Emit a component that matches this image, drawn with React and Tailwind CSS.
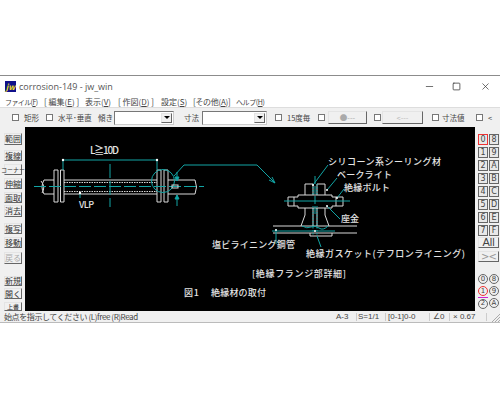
import { Minus, Square, X } from 'lucide-react';

const jp = "font-['Noto_Sans_CJK_JP','Noto_Sans',sans-serif]";
const bevel = 'border border-t-[#e4e4e4] border-l-[#e4e4e4] border-r-[#666] border-b-[#666] bg-[#f0f0f0]';

const sideButtons = [
  { label: '範囲', cls: 'mt-[6px] h-[12px]' },
  { label: '複線', cls: 'mt-[5px] h-[11px]' },
  { label: 'コーナー', cls: 'mt-[3px] h-[11px]', small: true },
  { label: '伸縮', cls: 'mt-[3px] h-[11px]' },
  { label: '面取', cls: 'mt-[3px] h-[11px]' },
  { label: '消去', cls: 'mt-[2px] h-[12px]' },
  { label: '複写', cls: 'mt-[6px] h-[11px]' },
  { label: '移動', cls: 'mt-[3px] h-[11px]' },
  { label: '戻る', cls: 'mt-[4px] h-[12px]', off: true },
  { label: '新規', cls: 'mt-[12px] h-[10px]' },
  { label: '開く', cls: 'mt-[2px] h-[11px]' },
  { label: '上書', cls: 'mt-[3px] h-[9px]', small: true },
];

const layerRows = [['0', '8'], ['1', '9'], ['2', 'A'], ['3', 'B'], ['4', 'C'], ['5', 'D'], ['6', 'E'], ['7', 'F']];

function Check({ cls = '' }) {
  return <span className={`inline-block w-[7px] h-[7px] shrink-0 bg-white border border-[#777] ${cls}`} />;
}

function Combo({ cls }) {
  return (
    <span className={`flex h-[14px] shrink-0 items-center justify-end bg-white border border-t-[#777] border-l-[#777] border-r-[#ccc] border-b-[#ccc] ${cls}`}>
      <span className={`flex h-[10px] w-[11px] items-center justify-center mr-[1px] ${bevel}`}>
        <span className="h-0 w-0 border-x-[3px] border-t-[3px] border-x-transparent border-t-black" />
      </span>
    </span>
  );
}

function Layer({ text, red }) {
  return (
    <span className={`flex h-[11px] w-[10px] items-center justify-center text-[8px] text-[#444] bg-[#e8e8e8] border ${red ? 'border-[#e33]' : 'border-[#666]'}`}>
      {text}
    </span>
  );
}

function Round({ text, ring, bar }) {
  return (
    <span className={`flex h-[12px] w-[10px] items-center justify-center ${bar ? 'border-t border-t-[#d020d0]' : ''}`}>
      <span className={`flex h-[10px] w-[10px] items-center justify-center rounded-full bg-[#eee] border text-[7px] text-[#444] ${ring ? 'border-[#e33]' : 'border-[#666]'}`}>
        {text}
      </span>
    </span>
  );
}

function Label({ x, y, w, children, size = 9 }) {
  return (
    <text x={x} y={y} textLength={w} lengthAdjust="spacing" fontSize={size} fill="#e4e4e4" fontWeight="500" fontFamily="'Noto Sans CJK JP', sans-serif">
      {children}
    </text>
  );
}

function Drawing() {
  const teal = '#12a5a5';
  const white = '#d8d8d8';
  return (
    <svg viewBox="25 127 450 184" className="block h-[184px] w-[450px]" fill="none" strokeWidth="1">
      {/* pipe */}
      <path d="M64 180H157M64 194H157M168 180H195Q198 187 195 194H168M54 180H44Q40 187 44 194H54" stroke={white} />
      <path d="M41 181Q46 187 42 193" stroke={white} />
      <path d="M64 182.500H157M64 191.500H157" stroke={white} strokeDasharray="1.500 1" />
      <path d="M54 170H58V202H54ZM60.500 170H64V202H60.500ZM157 170H161V202H157ZM164 170H168V202H164Z" stroke={white} />
      <path d="M34 186.500H204" stroke={teal} strokeDasharray="12 3" />
      <path d="M110 164V207" stroke={teal} strokeDasharray="14 3" />
      <path d="M63 160H157M63 160V170M157 160V170" stroke={teal} />
      <circle cx="63" cy="160" r="1.200" fill="#fff" />
      <circle cx="157" cy="160" r="1.200" fill="#fff" />
      <circle cx="163" cy="181" r="11.500" stroke={teal} />
      <path d="M174 176L184 165H257L275 183" stroke={teal} />
      <path d="M275 183L269 180M275 183L272 177" stroke={teal} />
      <rect x="172" y="185" width="6" height="3" stroke={white} />
      <path d="M177 172V180M177 195V206" stroke={teal} />
      <path d="M175 177L177 181L179 177ZM175 199L177 195L179 199Z" fill={teal} stroke={teal} />
      <path d="M80 193V198" stroke={teal} />
      <circle cx="80" cy="193" r="1.200" fill="#fff" />
      <Label x={90} y={154} w={29} size={10}>L≧10D</Label>
      <Label x={79} y={208} w={15} size={9}>VLP</Label>

      {/* flange detail */}
      <path d="M273 226H357M273 233H357M310 236H332V233M310 236V233" stroke={white} />
      <path d="M272 231H335" stroke={teal} />
      <path d="M305 195V184H313V195M317 195V184H325V195" stroke={white} />
      <path d="M288 197H298V195H332V197H343V206H332V208H298V206H288ZM294 197V206M336 197V206" stroke={white} />
      <path d="M305 208V215L301 226M325 208V215L329 226M313 208V226M317 208V226" stroke={white} />
      <path d="M302 226Q307 229 311 227T319 228T328 226" stroke={teal} />
      <path d="M313 206V236M317 206V236" stroke={teal} strokeDasharray="1.500 1.500" />
      <path d="M313 184V195M317 184V195" stroke={teal} strokeDasharray="1.500 1.500" />
      <path d="M315 176V216" stroke={teal} strokeDasharray="8 2" />
      <path d="M284 201H350" stroke={teal} />
      <path d="M313 185L328 165M327 190L337 178M337 198L344 189M327 206L340 219M276 229V244M317 236L321 247" stroke={teal} />
      <circle cx="313" cy="185" r="1" fill="#fff" />
      <circle cx="327" cy="190" r="1" fill="#fff" />
      <circle cx="337" cy="198" r="1" fill="#fff" />
      <circle cx="327" cy="206" r="1" fill="#fff" />
      <circle cx="276" cy="230" r="1" fill="#fff" />
      <circle cx="315" cy="231" r="1" fill="#fff" />

      <Label x={328} y={165} w={113}>シリコーン系シーリング材</Label>
      <Label x={337} y={178} w={55}>ベークライト</Label>
      <Label x={344} y={191} w={46}>絶縁ボルト</Label>
      <Label x={341} y={222} w={18}>座金</Label>
      <Label x={212} y={248} w={83}>塩ビライニング鋼管</Label>
      <Label x={306} y={257} w={159}>絶縁ガスケット(テフロンライニング)</Label>
      <Label x={252} y={277} w={94}>[絶縁フランジ部詳細]</Label>
      <Label x={184} y={296} w={15}>図1</Label>
      <Label x={211} y={296} w={55}>絶縁材の取付</Label>
    </svg>
  );
}

export default function App() {
  return (
    <div className={`h-[400px] w-[500px] overflow-hidden bg-white pt-[75px] text-[#333] ${jp}`}>
      <div className="border-t border-t-[#8c8c8c]">
        {/* title bar */}
        <div className="flex h-[21px] items-center">
          <span className="ml-[5px] flex h-[11px] w-[11px] items-center justify-center bg-[#10108a] text-[8px] font-bold italic leading-none text-[#f4e020]">jw</span>
          <span className="ml-[3px] font-['Open_Sans',sans-serif] text-[9px] text-[#555]">corrosion-149 - jw_win</span>
          <Minus className="ml-auto h-[11px] w-[11px] text-[#333]" strokeWidth={1.5} />
          <Square className="ml-[17px] h-[9px] w-[9px] text-[#333]" strokeWidth={2} />
          <X className="ml-[19px] mr-[9px] h-[11px] w-[11px] text-[#333]" strokeWidth={1.5} />
        </div>
        {/* menu */}
        <div className="flex h-[10px] items-center whitespace-nowrap text-[8px] leading-none text-[#444]">
          <span className="ml-[5px] w-[39px] text-[7px] tracking-[-0.6px]">ファイル(<u>F</u>)</span>
          <span className="w-[41px]">[ 編集(<u>E</u>) ]</span>
          <span className="w-[33px]">表示(<u>V</u>)</span>
          <span className="w-[43px]">[ 作図(<u>D</u>) ]</span>
          <span className="w-[32px]">設定(<u>S</u>)</span>
          <span className="w-[43px] tracking-[-0.3px]">[その他(<u>A</u>)]</span>
          <span className="text-[7px] tracking-[-0.4px]">ヘルプ(<u>H</u>)</span>
        </div>
        {/* toolbar */}
        <div className="flex h-[20px] items-center whitespace-nowrap border-t border-t-[#ddd] bg-[#f0f0f0] text-[7.5px] leading-none text-[#444]">
          <Check cls="ml-[12px]" />
          <span className="ml-[5px] w-[14px]">矩形</span>
          <Check cls="ml-[8px]" />
          <span className="ml-[5px] w-[34px]">水平･垂直</span>
          <span className="ml-[6px] w-[13px]">傾き</span>
          <Combo cls="ml-[3px] w-[60px]" />
          <span className="ml-[10px] w-[14px]">寸法</span>
          <Combo cls="ml-[4px] w-[65px]" />
          <Check cls="ml-[8px]" />
          <span className="ml-[5px] w-[24px]">15度毎</span>
          <Check cls="ml-[7px]" />
          <span className={`ml-[3px] flex h-[13px] w-[39px] shrink-0 items-center justify-center text-[#aaa] ${bevel}`}>●---</span>
          <Check cls="ml-[7px]" />
          <span className={`ml-[1px] flex h-[13px] w-[41px] shrink-0 items-center justify-center text-[#bbb] ${bevel}`}>&lt;---</span>
          <Check cls="ml-[9px]" />
          <span className="ml-[3px] w-[23px]">寸法値</span>
          <Check cls="ml-[11px]" />
          <span className="ml-[5px]">&lt;</span>
        </div>
        {/* main area */}
        <div className="flex h-[184px] overflow-hidden bg-[#f0f0f0]">
          <div className="flex w-[25px] flex-col items-start pl-[4px] text-[8px] leading-none text-[#333]">
            {sideButtons.map((b) => (
              <span
                key={b.label}
                className={`flex w-[18px] shrink-0 items-center justify-center whitespace-nowrap ${bevel} ${b.cls} ${b.off ? 'text-[#aaa]' : ''} ${b.small ? 'text-[6px]' : ''}`}
              >
                {b.label}
              </span>
            ))}
          </div>
          <div className="h-[184px] w-[450px] bg-black">
            <Drawing />
          </div>
          <div className="flex w-[25px] flex-col items-start pl-[3px] font-['DejaVu_Sans',sans-serif] leading-none">
            <div className="mt-[7px] flex flex-col gap-[2px]">
              {layerRows.map(([a, b]) => (
                <div key={a} className="flex gap-[1px]">
                  <Layer text={a} red={a === '0'} />
                  <Layer text={b} />
                </div>
              ))}
            </div>
            <span className={`mt-[1px] flex h-[11px] w-[21px] items-center justify-center font-['Liberation_Sans',sans-serif] text-[11px] text-[#444] ${bevel}`}>All</span>
            <span className={`mt-[3px] flex h-[11px] w-[21px] items-center justify-center text-[10px] tracking-[-1px] text-[#999] ${bevel}`}>&gt;&lt;</span>
            <div className="mt-[11px] flex flex-col">
              <div className="flex gap-[1px]"><Round text="0" /><Round text="8" /></div>
              <div className="flex gap-[1px]"><Round text="1" ring /><Round text="9" /></div>
              <div className="flex gap-[1px]"><Round text="2" bar /><Round text="A" /></div>
            </div>
          </div>
        </div>
        {/* status bar */}
        <div className="flex h-[12px] items-center border-b border-b-[#bbb] bg-[#f0f0f0] font-['Liberation_Sans',sans-serif] text-[8px] leading-none text-[#444]">
          <span className={`ml-[4px] w-[332px] tracking-[-0.4px] ${jp}`}>始点を指示してください (L)free (R)Read</span>
          <span className="w-[21px] border-r border-r-[#ccc]">A-3</span>
          <span className="w-[29px] border-r border-r-[#ccc] pl-[1px]">S=1/1</span>
          <span className="w-[44px] border-r border-r-[#ccc] pl-[2px]">[0-1]0-0</span>
          <span className="w-[20px] border-r border-r-[#ccc] pl-[3px]">∠0</span>
          <span className="w-[37px] border-r border-r-[#ccc] pl-[3px]">× 0.67</span>
          <svg viewBox="0 0 9 9" className="ml-auto h-[9px] w-[9px] self-end" stroke="#aaa" strokeWidth="1">
            <path d="M1 9L9 1M4 9L9 4M7 9L9 7" />
          </svg>
        </div>
      </div>
    </div>
  );
}
